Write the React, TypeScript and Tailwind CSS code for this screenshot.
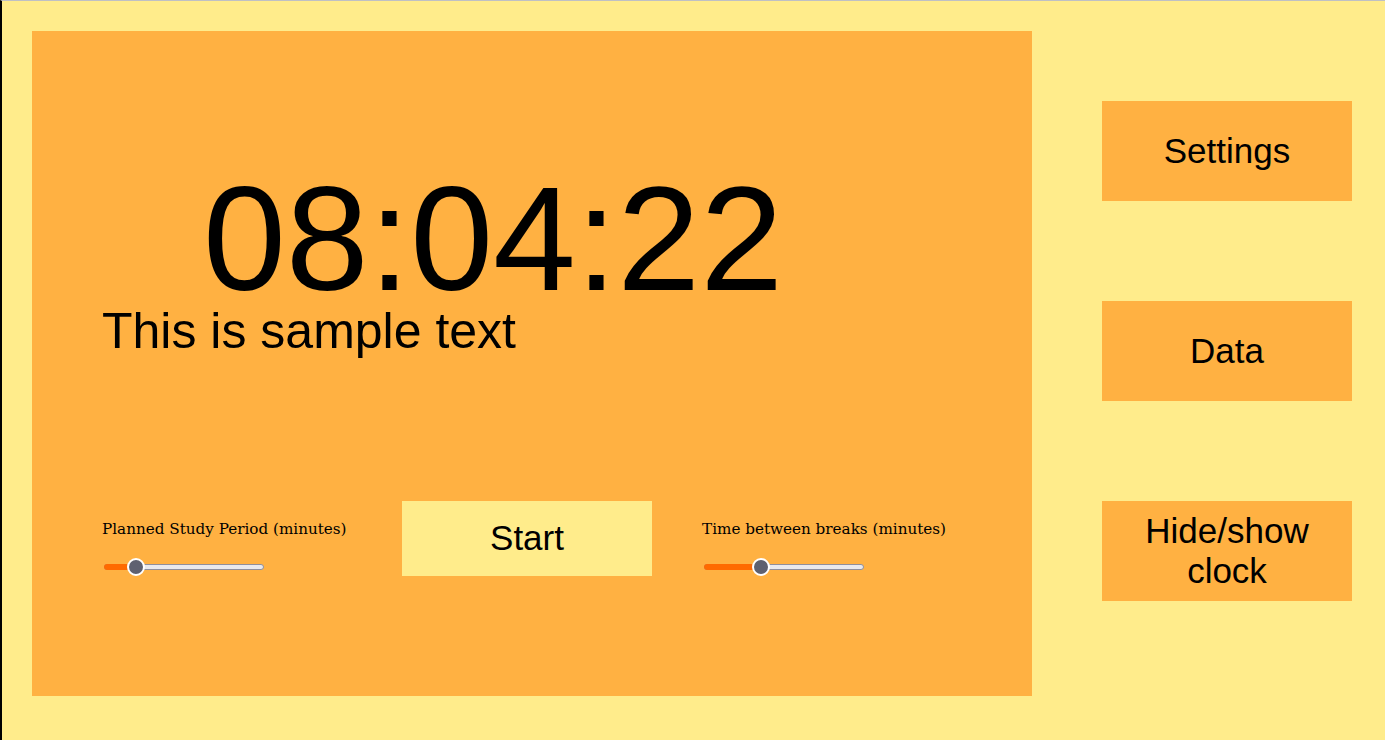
import React from "react";

function Slider({ frac }: { frac: number }) {
  const thumbLeft = frac * (160 - 18);
  return (
    <div className="relative ml-[2px] mt-[19px] h-[18px] w-[160px]">
      <div className="absolute left-0 right-0 top-[6px] h-[6px] rounded-full border border-[#8f8f9d] bg-[#e9e9ed]" />
      <div
        className="absolute left-0 top-[6px] h-[6px] rounded-full bg-[#ff6a00]"
        style={{ width: thumbLeft + 9 }}
      />
      <div
        className="absolute top-0 h-[18px] w-[18px] rounded-full border-2 border-white bg-[#5f6170]"
        style={{ left: thumbLeft }}
      />
    </div>
  );
}

export default function App() {
  return (
    <div className="box-border h-[740px] w-full overflow-hidden border-l-2 border-t border-l-black border-t-[#bfc0c4] bg-[#ffec8b] font-['Liberation_Sans',Arial,sans-serif] text-black">
      <div className="flex pl-[30px] pt-[30px]">
        <div className="flex h-[665px] w-[1000px] shrink-0 flex-col bg-[#ffb142] pl-[70px]">
          <div className="ml-[101px] mt-[143px] h-[130px] text-[149px] leading-[130px] whitespace-nowrap">
            08:04:22
          </div>
          <div className="mt-[2px] h-[50px] text-[50px] leading-none whitespace-nowrap">
            This is sample text
          </div>
          <div className="mt-[145px] flex gap-[50px]">
            <div className="w-[250px]">
              <div className="mt-[18px] font-['DejaVu_Serif',serif] text-[15.2px] leading-[20px] whitespace-nowrap">
                Planned Study Period (minutes)
              </div>
              <Slider frac={0.162} />
            </div>
            <button className="flex h-[75px] w-[250px] items-center justify-center bg-[#ffec8b] text-[35px]">
              Start
            </button>
            <div className="w-[250px]">
              <div className="mt-[18px] font-['DejaVu_Serif',serif] text-[15.2px] leading-[20px] whitespace-nowrap">
                Time between breaks (minutes)
              </div>
              <Slider frac={0.338} />
            </div>
          </div>
        </div>
        <div className="ml-[70px] flex flex-col gap-[100px] pt-[70px]">
          <button className="flex h-[100px] w-[250px] items-center justify-center bg-[#ffb142] text-[35px] leading-[40px]">
            Settings
          </button>
          <button className="flex h-[100px] w-[250px] items-center justify-center bg-[#ffb142] text-[35px] leading-[40px]">
            Data
          </button>
          <button className="flex h-[100px] w-[250px] items-center justify-center bg-[#ffb142] px-[20px] text-center text-[35px] leading-[40px]">
            Hide/show clock
          </button>
        </div>
      </div>
    </div>
  );
}
